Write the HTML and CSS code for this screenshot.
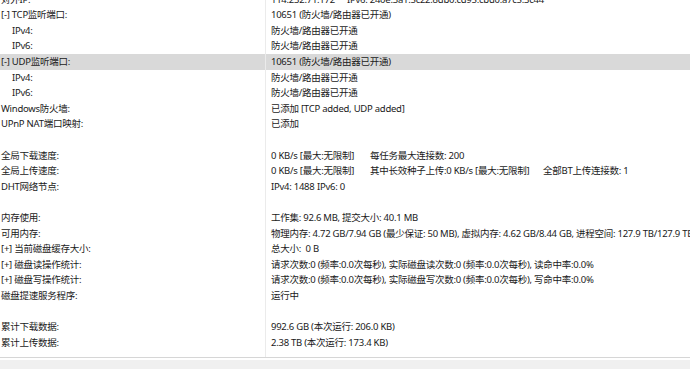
FILE: index.html
```html
<!DOCTYPE html>
<html lang="zh-CN">
<head>
    <meta charset="UTF-8">
    <meta name="viewport" content="width=device-width, initial-scale=1.0">
    <title>统计</title>
    <link rel="stylesheet" href="styles.css">
</head>
<body>

<div class="panel">
    <div class="list">
        <div class="row"><div class="key">对外IP:</div><div class="val"><span class="ip4">114.232.71.172</span>IPv6: 240e:3a1:5c22:8db0:cd95:cbd0:a7c5:3c44</div></div>
        <div class="row"><div class="key">[-] TCP监听端口:</div><div class="val">10651 (防火墙/路由器已开通)</div></div>
        <div class="row"><div class="key sub">IPv4:</div><div class="val">防火墙/路由器已开通</div></div>
        <div class="row"><div class="key sub">IPv6:</div><div class="val">防火墙/路由器已开通</div></div>
        <div class="row selected"><div class="key">[-] UDP监听端口:</div><div class="val">10651 (防火墙/路由器已开通)</div></div>
        <div class="row"><div class="key sub">IPv4:</div><div class="val">防火墙/路由器已开通</div></div>
        <div class="row"><div class="key sub">IPv6:</div><div class="val">防火墙/路由器已开通</div></div>
        <div class="row"><div class="key">Windows防火墙:</div><div class="val">已添加 [TCP added, UDP added]</div></div>
        <div class="row"><div class="key">UPnP NAT端口映射:</div><div class="val">已添加</div></div>
        <div class="row"><div class="key"></div><div class="val"></div></div>
        <div class="row"><div class="key">全局下载速度:</div><div class="val"><span class="col1">0 KB/s [最大:无限制]</span>每任务最大连接数: 200</div></div>
        <div class="row"><div class="key">全局上传速度:</div><div class="val"><span class="col1">0 KB/s [最大:无限制]</span><span class="col2">其中长效种子上传:0 KB/s [最大:无限制]</span>全部BT上传连接数: 1</div></div>
        <div class="row"><div class="key">DHT网络节点:</div><div class="val"><span class="dht4">IPv4: 1488</span>IPv6: 0</div></div>
        <div class="row"><div class="key"></div><div class="val"></div></div>
        <div class="row"><div class="key">内存使用:</div><div class="val">工作集: 92.6 MB, 提交大小: 40.1 MB</div></div>
        <div class="row"><div class="key">可用内存:</div><div class="val">物理内存: 4.72 GB/7.94 GB (最少保证: 50 MB), 虚拟内存: 4.62 GB/8.44 GB, 进程空间: 127.9 TB/127.9 TB</div></div>
        <div class="row"><div class="key">[+] 当前磁盘缓存大小:</div><div class="val">总大小:&nbsp; 0 B</div></div>
        <div class="row"><div class="key">[+] 磁盘读操作统计:</div><div class="val">请求次数:0 (频率:0.0次每秒), 实际磁盘读次数:0 (频率:0.0次每秒), 读命中率:0.0%</div></div>
        <div class="row"><div class="key">[+] 磁盘写操作统计:</div><div class="val">请求次数:0 (频率:0.0次每秒), 实际磁盘写次数:0 (频率:0.0次每秒), 写命中率:0.0%</div></div>
        <div class="row"><div class="key">磁盘提速服务程序:</div><div class="val">运行中</div></div>
        <div class="row"><div class="key"></div><div class="val"></div></div>
        <div class="row"><div class="key">累计下载数据:</div><div class="val">992.6 GB (本次运行: 206.0 KB)</div></div>
        <div class="row"><div class="key">累计上传数据:</div><div class="val">2.38 TB (本次运行: 173.4 KB)</div></div>
        <div class="row filler"><div class="key"></div><div class="val"></div></div>
    </div>
</div>
<div class="statusbar"></div>

</body>
</html>
```

FILE: styles.css
```css
body {
    margin: 0;
    background: #fff;
    font-family: "Noto Sans", "Noto Sans CJK SC", sans-serif;
    font-size: 9.5px;
    letter-spacing: -0.25px;
    color: #1a1a1a;
    overflow: hidden;
}
.panel {
    height: 357px;
    overflow: hidden;
}
.list {
    display: flex;
    flex-direction: column;
    height: 365.4px;
    margin-top: -8.4px;
}
.row {
    display: grid;
    grid-template-columns: 265px 1fr;
    height: 15.6px;
    line-height: 15.6px;
    white-space: nowrap;
}
.row.selected {
    background: #d9d9d9;
}
.row.filler {
    flex: 1;
}
.key {
    padding-left: 1px;
    overflow: hidden;
}
.key.sub {
    padding-left: 12px;
}
.val {
    border-left: 1px solid #ebebeb;
    padding-left: 5px;
    overflow: hidden;
}
.ip4 {
    display: inline-block;
    width: 76px;
}
.dht4 {
    display: inline-block;
    width: 46px;
}
.col1 {
    display: inline-block;
    width: 99px;
}
.col2 {
    display: inline-block;
    width: 173px;
}
.statusbar {
    border-top: 1px solid #d6d6d6;
    height: 12px;
    box-sizing: border-box;
    background: linear-gradient(#fff 0 2px, #f0f0f0 2px);
}
```
